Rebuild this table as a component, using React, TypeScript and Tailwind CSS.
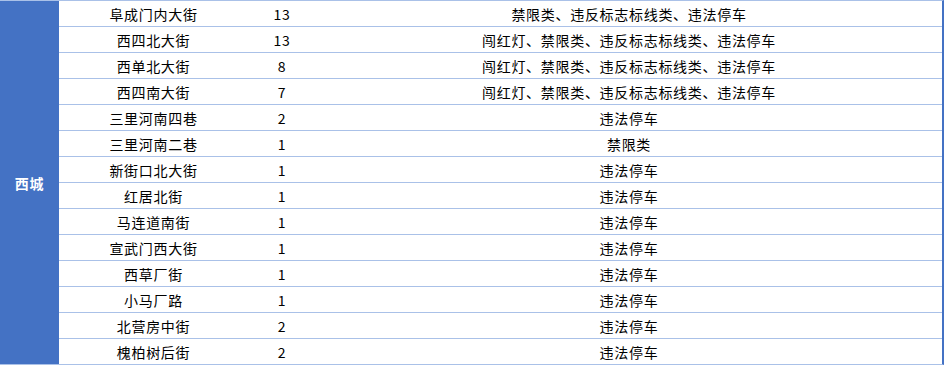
import React from 'react';

const rows: [string, string, string][] = [
  ['阜成门内大街', '13', '禁限类、违反标志标线类、违法停车'],
  ['西四北大街', '13', '闯红灯、禁限类、违反标志标线类、违法停车'],
  ['西单北大街', '8', '闯红灯、禁限类、违反标志标线类、违法停车'],
  ['西四南大街', '7', '闯红灯、禁限类、违反标志标线类、违法停车'],
  ['三里河南四巷', '2', '违法停车'],
  ['三里河南二巷', '1', '禁限类'],
  ['新街口北大街', '1', '违法停车'],
  ['红居北街', '1', '违法停车'],
  ['马连道南街', '1', '违法停车'],
  ['宣武门西大街', '1', '违法停车'],
  ['西草厂街', '1', '违法停车'],
  ['小马厂路', '1', '违法停车'],
  ['北营房中街', '2', '违法停车'],
  ['槐柏树后街', '2', '违法停车'],
];

export default function App() {
  return (
    <div
      className="w-[944px] h-[365px] bg-white flex border-t border-b border-[#aac1e8] border-r-2 border-r-[#4472c4] text-black text-[14px] leading-none tracking-[0.7px]"
      style={{ fontFamily: '"Noto Sans CJK SC", "Liberation Sans", sans-serif' }}
    >
      <div className="w-[59px] shrink-0 bg-[#4472c4] flex items-center justify-center text-white font-bold">
        西城
      </div>
      <ul className="flex-1 flex flex-col">
        {rows.map(([street, count, types], i) => (
          <li
            key={street}
            className={`flex items-center pt-px ${i < rows.length - 1 ? 'h-[26px] border-b border-[#aac1e8]' : 'h-[25px]'}`}
          >
            <div className="w-[189px] text-center">{street}</div>
            <div className="w-[68px] text-center">{count}</div>
            <div className="flex-1 text-center">{types}</div>
          </li>
        ))}
      </ul>
    </div>
  );
}
